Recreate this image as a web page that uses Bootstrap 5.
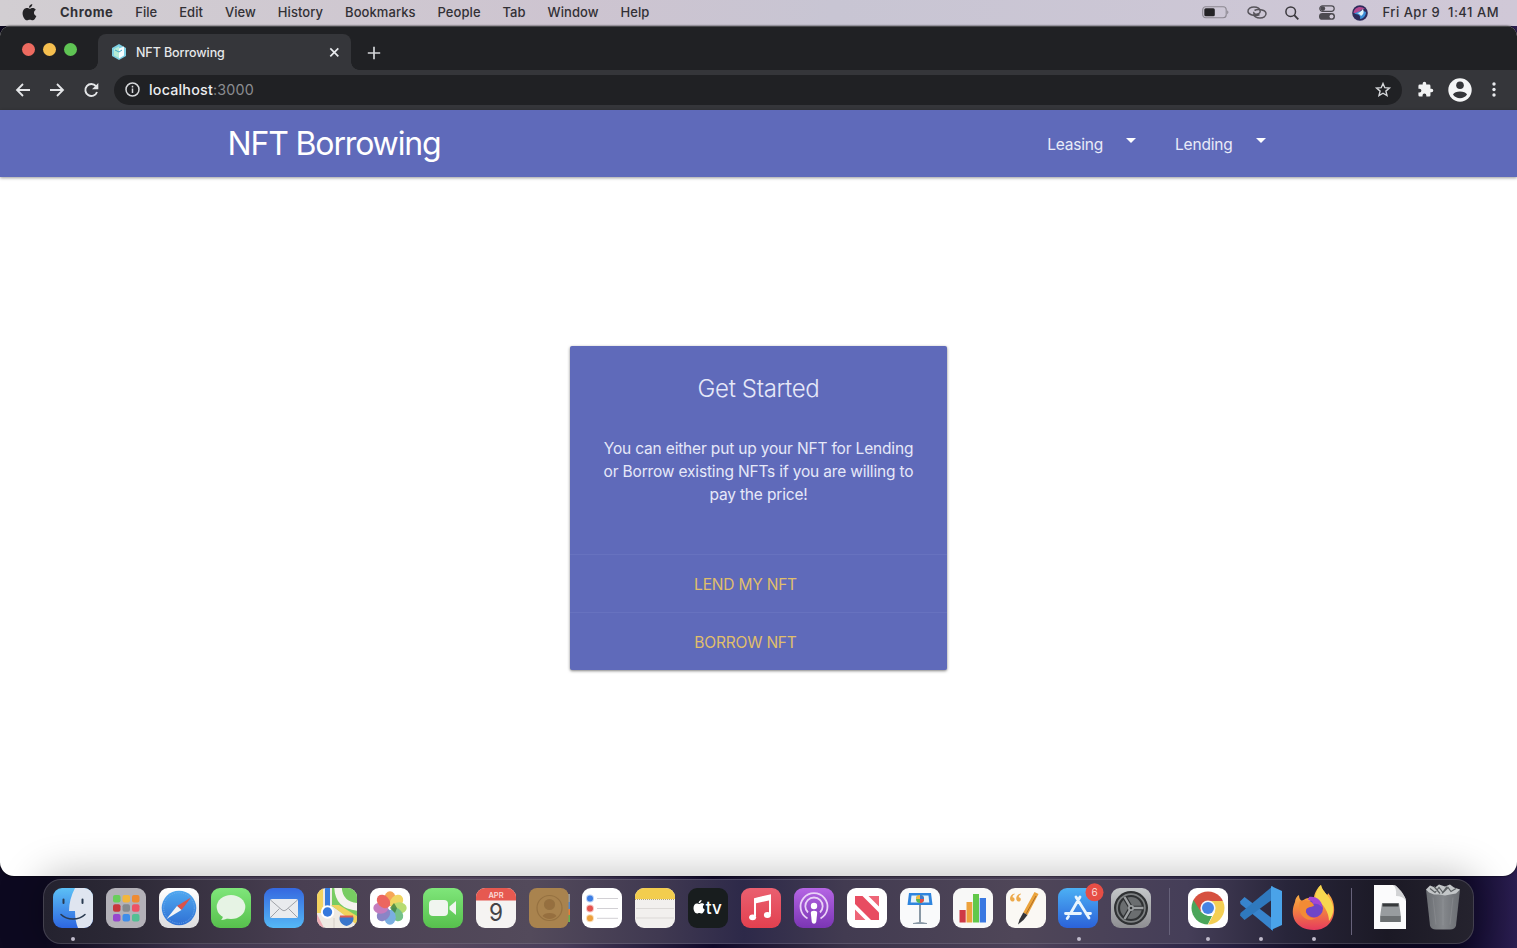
<!DOCTYPE html>
<html lang="en">
<head>
<meta charset="utf-8">
<meta name="viewport" content="width=device-width, initial-scale=1">
<title>NFT Borrowing</title>
<link href="https://cdn.jsdelivr.net/npm/bootstrap@5.3.0/dist/css/bootstrap.min.css" rel="stylesheet">
<style>
html,body{height:100%;overflow:hidden}
body{font-family:Inter,"Liberation Sans",sans-serif;background:linear-gradient(90deg,#0d0920 0,#0d0920 3%,#4a3f5c 13%,#66566f 28%,#55486a 37%,#120a30 47%,#453c56 56%,#5a4d69 68%,#322a52 80%,#100b24 88%,#0c0726 96%,#2b1e50 100%);height:948px}
svg{display:block;overflow:visible;flex:none}
.menubar{height:26px;background:linear-gradient(90deg,#d2ced2,#cdc4d0 38%,#c8c5d3 55%,#d0c8d7);color:#323035;font-size:13px;font-weight:500;padding:0 18px 1px 22px}
.menus{gap:21.9px;margin-left:23px}
.menus span{letter-spacing:.07px}
.menus b{letter-spacing:.5px}
.clock{margin-left:14px;letter-spacing:.5px}
.chrome-win{height:850px;border-radius:10px 10px 14px 14px;overflow:hidden;background:#fff;box-shadow:0 0 2px #000}
.tabstrip{height:44px;background:#202124;border-top:1px solid #4a4a4d}
.lights{gap:8px;padding:16px 0 0 22px;width:98px}
.light{width:13px;height:13px;border-radius:50%}
.tab-active{width:253px;height:36px;margin-top:7px;background:#35363a;border-radius:8px 8px 0 0;color:#e6e8ea;font-size:12.5px;font-weight:500;letter-spacing:-.08px;padding:0 11px 0 13px;position:relative}
.tab-active:before,.tab-active:after{content:"";position:absolute;bottom:0;width:8px;height:8px}
.tab-active:before{left:-8px;background:radial-gradient(circle at 0 0,transparent 7.5px,#35363a 8px)}
.tab-active:after{right:-8px;background:radial-gradient(circle at 100% 0,transparent 7.5px,#35363a 8px)}
.toolbar{height:40px;background:#35363a;padding:0 21px 1px 15px}
.omnibox{height:30px;border-radius:15px;background:#202124;margin-left:15px;padding:0 11px;font-size:14.3px;letter-spacing:.2px;color:#8b8d91}
.omnibox b{font-weight:500;color:#eceef0}
.app-nav{height:67px;background:#5f6aba;box-shadow:0 1px 3px rgba(0,0,0,.4);color:#fff}
.app-inner{width:1062px}
.brand-title{font-size:32px;letter-spacing:-1.15px;padding-top:1px}
.nav-drop{font-size:15.5px;color:#e9ebf8;padding:3px 24px 0 14.5px;gap:23px;letter-spacing:-.2px}
.nav-drop+.nav-drop{padding-left:15px}
.caret{border:5.5px solid transparent;border-top-color:#fff;border-bottom:0;margin-top:-10px}
.stage{padding-top:168.5px}
.start-card{width:377px;height:324.5px;background:#5f6aba;border-radius:2px;box-shadow:0 1px 3px rgba(0,0,0,.5);color:#e6e8f8}
.start-card h1{font-size:24px;font-weight:300;letter-spacing:-.35px;line-height:30px;margin:28px 0 33.500px}
.start-card p{font-size:15.5px;line-height:23.2px;letter-spacing:-.17px;margin:0}
.start-top{height:208px}
.action-row{height:58px;border-top:1px solid #6772bf;padding-right:26px;color:#e0bf6b;font-size:15.5px;letter-spacing:-.2px;text-decoration:none;line-height:59px}
.dock-wrap{height:72px;padding:3px 43px 4px}
.dock{height:65px;border-radius:18px;border:1px solid rgba(160,155,175,.25);background:linear-gradient(90deg,#24222f 0,#2b2835 5%,#493f52 18%,#534a5b 34%,#403951 43%,#2d2949 49%,#423b51 56%,#4f4658 68%,#453e58 80%,#28253a 87%,#1b1925 94%,#25232e 100%);box-shadow:0 0 42px 3px rgba(0,0,0,.28);padding-left:2.2px;position:relative}
.dock-item{width:52.95px;height:63px;padding-top:8px;position:relative;flex:none}
.dock-item svg{margin:auto}
.run:after{content:"";position:absolute;left:24.5px;top:56.5px;width:4px;height:4px;border-radius:50%;background:#c0bbcb}
.rule{width:23.5px;flex:none}
.rule:after{content:"";display:block;width:1px;height:47px;margin:8px auto;background:#67627a}
</style>
</head>
<body>
<header class="menubar d-flex align-items-center">
  <svg width="15" height="17" viewBox="0 0 15 17" fill="#242326"><path d="M10.3 0C10.5 1.8 9 3.8 7 3.8 6.8 2.1 8.5.2 10.3 0zM7.6 4.8c.8 0 1.6-.8 3-.8 1.300 0 2.500.7 3.200 1.700-2.700 1.600-2.300 5.200.6 6.300C13.500 14.200 12.200 16.300 10.600 16.300c-1 0-1.500-.6-2.800-.6s-1.800.6-2.800.6C2.800 16.300.6 12.600.6 9.500.6 6.200 2.500 4.100 4.900 4.100c1.200 0 2 .7 2.700.7z"/></svg>
  <nav class="menus d-flex"><b>Chrome</b><span>File</span><span>Edit</span><span>View</span><span>History</span><span>Bookmarks</span><span>People</span><span>Tab</span><span>Window</span><span>Help</span></nav>
  <div class="d-flex align-items-center ms-auto">
    <svg width="27" height="13" viewBox="0 0 27 13"><rect x=".7" y=".8" width="23.500" height="11" rx="3" fill="none" stroke="#8c8891" stroke-width="1.100"/><rect x="2.300" y="2.300" width="10.500" height="8" rx="1.500" fill="#242326"/><path d="M25.200 4.300q2.500 2 0 4z" fill="#8c8891"/></svg>
    <svg style="margin-left:18px" width="20" height="13" viewBox="0 0 20 13" fill="none" stroke="#57545b" stroke-width="1.500"><path d="M12.500 8.500C10 10 2 9.800 1 5.800.5 2.500 4 1 7 1c3.500 0 6.500 1.800 6.200 4.500-.2 2-2.700 3-5 2.500-1.200-.4-1.700-1.200-1.200-2"/><path d="M7.500 4.500c2.500-1.500 10.500-1.300 11.500 2.700.5 3.300-3 4.800-6 4.800-3.500 0-6.500-1.800-6.200-4.500"/></svg>
    <svg style="margin-left:18px" width="14" height="14" viewBox="0 0 14 14" fill="none" stroke="#3a383d" stroke-width="1.500"><circle cx="5.700" cy="5.700" r="4.800"/><path d="M9.200 9.200 13.300 13.300" stroke-width="1.900"/></svg>
    <svg style="margin-left:20px" width="16" height="15" viewBox="0 0 16 15"><rect x=".8" y=".8" width="14.400" height="5.600" rx="2.800" fill="none" stroke="#4c4a50" stroke-width="1.200"/><circle cx="3.800" cy="3.600" r="2.400" fill="#4c4a50"/><rect y="8" width="16" height="6.800" rx="3.400" fill="#4c4a50"/><circle cx="12.500" cy="11.400" r="2" fill="#d0c8d7"/></svg>
    <svg style="margin-left:17px" width="16" height="16" viewBox="0 0 16 16"><circle cx="8" cy="8" r="7.800" fill="#2d2b5c"/><path d="M1.500 8C2 2 9 0 13 4 9 4 8 6 7 8z" fill="#b54a91"/><path d="M2 9c4-3 9-4 12-2 0 4-3 7-6 7C9 10 6 9 2 9z" fill="#3c8fd8"/><path d="M5 8c3 0 4-2 6-4 1 3 1 5-2 7-1-1.500-2-2.500-4-3z" fill="#e0f3fa"/></svg>
    <span class="clock text-nowrap">Fri Apr 9&nbsp; 1:41 AM</span>
  </div>
</header>

<main class="chrome-win">
  <div class="tabstrip d-flex">
    <div class="lights d-flex"><i class="light" style="background:#ed6b60"></i><i class="light" style="background:#f5bf4f"></i><i class="light" style="background:#5fc454"></i></div>
    <div class="tab-active d-flex align-items-center">
      <svg width="16" height="16" viewBox="0 0 16 16"><path d="M8 0l7 4v8l-7 4-7-4V4z" fill="#7fd0e4"/><path d="M8 4.500l5-2v9L8 14.500z" fill="#f5fdff"/><path d="M3 5l5-2.500V14l-5-2.500z" fill="#b5ecd6"/><path d="M4 6l4 2 3-2" stroke="#46aacb" fill="none"/></svg>
      <span style="margin-left:9px;padding-top:2px">NFT Borrowing</span>
      <svg class="ms-auto" width="11" height="11" viewBox="0 0 11 11" stroke="#e8eaed" stroke-width="1.700"><path d="M1.300 1.300l8 8M9.300 1.300l-8 8"/></svg>
    </div>
    <svg style="margin:19px 0 0 16px" width="14" height="14" viewBox="0 0 14 14" stroke="#d3d5d8" stroke-width="1.700"><path d="M7 .8v12.400M.8 7h12.400"/></svg>
  </div>
  <div class="toolbar d-flex align-items-center">
    <svg width="16" height="14" viewBox="0 0 16 14" fill="none" stroke="#e4e6e8" stroke-width="1.800"><path d="M15 7H2M8 1L2 7l6 6"/></svg>
    <svg style="margin-left:18px" width="16" height="14" viewBox="0 0 16 14" fill="none" stroke="#e4e6e8" stroke-width="1.800"><path d="M1 7h13M8 1l6 6-6 6"/></svg>
    <svg style="margin-left:18px" width="16" height="14" viewBox="0 0 16 14" fill="none" stroke="#e4e6e8" stroke-width="1.900"><path d="M13 3.200A6 6 0 1 0 14 9"/><path d="M15.300 0v6.300H9z" fill="#e4e6e8" stroke="none"/></svg>
    <div class="omnibox d-flex align-items-center flex-grow-1">
      <svg width="15" height="15" viewBox="0 0 15 15" fill="none" stroke="#d5d7da" stroke-width="1.500"><circle cx="7.500" cy="7.500" r="6.500"/><path d="M7.500 6.500v4.500M7.500 3.800v1.600"/></svg>
      <span style="margin-left:9px"><b>localhost</b>:3000</span>
      <svg class="ms-auto" width="16" height="15" viewBox="0 0 16 15" fill="none" stroke="#d5d7da" stroke-width="1.400"><path d="M8 1.500l1.800 4.200 4.600.4-3.500 3 1.100 4.500-4-2.400-4 2.400 1.100-4.500-3.500-3 4.600-.4z"/></svg>
    </div>
    <svg style="margin-left:15px" width="17" height="17" viewBox="0 0 24 24" fill="#f2f3f4"><path d="M20.500 11H19V7a2 2 0 0 0-2-2h-4V3.500a2.500 2.500 0 0 0-5 0V5H4a2 2 0 0 0-2 2v3.800h1.500a2.700 2.700 0 0 1 0 5.400H2V20a2 2 0 0 0 2 2h3.800v-1.500a2.700 2.700 0 0 1 5.400 0V22H17a2 2 0 0 0 2-2v-4h1.500a2.500 2.500 0 0 0 0-5z"/></svg>
    <svg style="margin-left:14px" width="24" height="24" viewBox="0 0 24 24"><circle cx="12" cy="12" r="11.700" fill="#f4f5f6"/><circle cx="12" cy="7.300" r="3.800" fill="#35363a"/><path d="M5 16.500c1.500-4 12.500-4 14 0-3.300 5-10.700 5-14 0z" fill="#35363a"/></svg>
    <svg style="margin-left:20px" width="4" height="15" viewBox="0 0 4 15" fill="#e8eaed"><circle cx="2" cy="2" r="1.700"/><circle cx="2" cy="7.500" r="1.700"/><circle cx="2" cy="13" r="1.700"/></svg>
  </div>
  <nav class="app-nav d-flex justify-content-center">
    <div class="app-inner d-flex align-items-center justify-content-between">
      <span class="brand-title">NFT Borrowing</span>
      <div class="d-flex"><div class="nav-drop d-flex align-items-center">Leasing<i class="caret"></i></div><div class="nav-drop d-flex align-items-center">Lending<i class="caret"></i></div></div>
    </div>
  </nav>
  <section class="stage d-flex justify-content-center">
    <div class="start-card text-center">
      <div class="start-top d-flex flex-column">
        <h1>Get Started</h1>
        <p>You can either put up your NFT for Lending<br>or Borrow existing NFTs if you are willing to<br>pay the price!</p>
      </div>
      <a class="action-row d-block">LEND MY NFT</a>
      <a class="action-row d-block">BORROW NFT</a>
    </div>
  </section>
</main>

<div class="dock-wrap">
<svg width="0" height="0" class="position-absolute"><defs>
  <linearGradient id="gFind" x2="0" y2="1"><stop stop-color="#5cc0f6"/><stop offset="1" stop-color="#2d66e0"/></linearGradient>
  <linearGradient id="gGreen" x2="0" y2="1"><stop stop-color="#7fe67a"/><stop offset="1" stop-color="#57c04d"/></linearGradient>
  <linearGradient id="gMail" x2="0" y2="1"><stop stop-color="#3568e0"/><stop offset="1" stop-color="#55b8f5"/></linearGradient>
  <linearGradient id="gSaf" x2="0" y2="1"><stop stop-color="#4fa8f0"/><stop offset="1" stop-color="#2f70d4"/></linearGradient>
  <linearGradient id="gWhite" x2="0" y2="1"><stop stop-color="#fff"/><stop offset="1" stop-color="#dcdcde"/></linearGradient>
  <linearGradient id="gPod" x2="0" y2="1"><stop stop-color="#b565e4"/><stop offset="1" stop-color="#7a35b4"/></linearGradient>
  <linearGradient id="gStore" x2="0" y2="1"><stop stop-color="#4cb0f4"/><stop offset="1" stop-color="#2b62d9"/></linearGradient>
  <linearGradient id="gMusic" x2="0" y2="1"><stop stop-color="#ea6070"/><stop offset="1" stop-color="#e2404f"/></linearGradient>
  <linearGradient id="gGrey" x2="0" y2="1"><stop stop-color="#c5c8ca"/><stop offset="1" stop-color="#8e8e92"/></linearGradient>
  <linearGradient id="gFox" x2="0" y2="1"><stop stop-color="#fbc94e"/><stop offset=".5" stop-color="#f38a3d"/><stop offset="1" stop-color="#e63a5e"/></linearGradient>
  <linearGradient id="gTrash" x2="1" y2="0"><stop stop-color="#6a6d72"/><stop offset=".5" stop-color="#85888c"/><stop offset="1" stop-color="#6a6d72"/></linearGradient>
  <clipPath id="tile"><rect width="40" height="40" rx="9"/></clipPath>
  <clipPath id="disc"><circle cx="20" cy="20" r="16.500"/></clipPath>
</defs></svg>
<div class="dock d-flex">
  <div class="dock-item run"><svg width="40" height="40"><g clip-path="url(#tile)"><rect width="40" height="40" fill="url(#gFind)"/><path d="M22 0C18 8 16 15 16 23h6c0 7 1 12 3 17h15V0z" fill="#dfe5f0"/></g><path d="M10.500 11.500v3.500M29.500 11.500v3.500" stroke="#293a50" stroke-width="2" stroke-linecap="round"/><path d="M8 26.500c6 6 18 6 24 0" fill="none" stroke="#293a50" stroke-width="1.500" stroke-linecap="round"/></svg></div>
  <div class="dock-item"><svg width="40" height="40"><rect width="40" height="40" rx="9" fill="#b3b1b8"/><g><rect x="7" y="7" width="7.500" height="7.500" rx="2" fill="#68ce5b"/><rect x="16.500" y="7" width="7.500" height="7.500" rx="2" fill="#f3b63d"/><rect x="26" y="7" width="7.500" height="7.500" rx="2" fill="#ee8b32"/><rect x="7" y="16.300" width="7.500" height="7.500" rx="2" fill="#c8363b"/><rect x="16.500" y="16.300" width="7.500" height="7.500" rx="2" fill="#858a8e"/><rect x="26" y="16.300" width="7.500" height="7.500" rx="2" fill="#ee5265"/><rect x="7" y="26" width="7.500" height="7.500" rx="2" fill="#9746ce"/><rect x="16.500" y="26" width="7.500" height="7.500" rx="2" fill="#408de9"/><rect x="26" y="26" width="7.500" height="7.500" rx="2" fill="#53bf94"/></g></svg></div>
  <div class="dock-item"><svg width="40" height="40"><rect width="40" height="40" rx="9" fill="url(#gWhite)"/><circle cx="20" cy="20" r="17.300" fill="url(#gSaf)"/><circle cx="20" cy="20" r="15.300" fill="none" stroke="#7fb6ef" stroke-width="1" stroke-dasharray=".7 1.200"/><path d="M32 9.500 18 18l4.500 4z" fill="#d9534a"/><path d="M7.500 31l10.500-13 4.500 4z" fill="#f2f4f6"/></svg></div>
  <div class="dock-item"><svg width="40" height="40"><rect width="40" height="40" rx="9" fill="url(#gGreen)"/><ellipse cx="20" cy="19" rx="14.300" ry="12" fill="#e6f3e4"/><path d="M12 27c0 3-1 4-2 5 3 0 6-1 8-3z" fill="#e6f3e4"/></svg></div>
  <div class="dock-item"><svg width="40" height="40"><rect width="40" height="40" rx="9" fill="url(#gMail)"/><rect x="6" y="11" width="28" height="19" rx="2" fill="#e9ebee"/><path d="M6.500 12l11.500 10q2 1.500 4 0L33.500 12M6.500 29.500l9-9M33.500 29.500l-9-9" fill="none" stroke="#a0a3a9"/></svg></div>
  <div class="dock-item"><svg width="40" height="40"><g clip-path="url(#tile)"><rect width="40" height="40" fill="#eeeae3"/><path d="M0 0h6v25H0z" fill="#f3d35f"/><path d="M15 0h25v35L15 18z" fill="#78cc62"/><path d="M21 -2q0 20 21 21" stroke="#f5f3ee" stroke-width="7.500" fill="none"/><path d="M14 17 40 37v-9L22 17z" fill="#f1d25c"/><path d="M0 26 7 40H0z" fill="#edacb5"/><path d="M10.500 0v21" stroke="#397dde" stroke-width="5"/><path d="M17 30v10" stroke="#d4cec7"/><circle cx="10.500" cy="24" r="6.700" fill="#fff"/><circle cx="10.500" cy="24" r="4.700" fill="#3579dd"/><path d="M23 28c4 1 9 1 13 0 2 5-2 9-6.500 10C25 37 21 33 23 28z" fill="#3976cb"/><path d="M23 27.500h13v2H23z" fill="#db5a51"/></g></svg></div>
  <div class="dock-item"><svg width="40" height="40"><rect width="40" height="40" rx="9" fill="#fff"/><g opacity=".86"><ellipse cx="20" cy="10.800" rx="5.800" ry="7.500" fill="#f5983c"/><ellipse cx="20" cy="10.800" rx="5.800" ry="7.500" transform="rotate(45 20 20)" fill="#efcf48"/><ellipse cx="20" cy="10.800" rx="5.800" ry="7.500" transform="rotate(90 20 20)" fill="#acd65b"/><ellipse cx="20" cy="10.800" rx="5.800" ry="7.500" transform="rotate(135 20 20)" fill="#5fb878"/><ellipse cx="20" cy="10.800" rx="5.800" ry="7.500" transform="rotate(180 20 20)" fill="#65a1dd"/><ellipse cx="20" cy="10.800" rx="5.800" ry="7.500" transform="rotate(225 20 20)" fill="#7772bd"/><ellipse cx="20" cy="10.800" rx="5.800" ry="7.500" transform="rotate(270 20 20)" fill="#bb67b4"/><ellipse cx="20" cy="10.800" rx="5.800" ry="7.500" transform="rotate(315 20 20)" fill="#e94e46"/></g><path d="M20 20l4-5 3 5-2 5z" fill="#41813d" opacity=".8"/></svg></div>
  <div class="dock-item"><svg width="40" height="40"><rect width="40" height="40" rx="9" fill="url(#gGreen)"/><rect x="6" y="12" width="19" height="16" rx="4" fill="#f0f5ef"/><path d="M26.500 18.500l6.500-5.500v14l-6.500-5.500z" fill="#f0f5ef"/></svg></div>
  <div class="dock-item"><svg width="40" height="40"><g clip-path="url(#tile)"><rect width="40" height="40" fill="#f5f3f2"/><rect width="40" height="12.500" fill="#e65950"/></g><text x="20" y="9.800" text-anchor="middle" font-size="7.500" font-weight="600" fill="#fbdcd9">APR</text><text x="20" y="33" text-anchor="middle" font-size="24" fill="#454447" textLength="14" lengthAdjust="spacingAndGlyphs">9</text></svg></div>
  <div class="dock-item"><svg width="40" height="40"><path d="M38 6h3v9h-3z" fill="#999"/><path d="M38 14h3v7h-3z" fill="#5686c4"/><path d="M38 21h3v6h-3z" fill="#e57e3b"/><path d="M38 27h3v7h-3z" fill="#67ae50"/><rect width="39.500" height="40" rx="8" fill="#a9834e"/><g fill="none" stroke="#957141" stroke-width="1.200"><circle cx="20.500" cy="20" r="12.500"/><circle cx="20.500" cy="16.500" r="5" fill="#966f3f"/></g><path d="M13.500 28c2-4 12-4 14 0-4 4-10 4-14 0z" fill="#966f3f"/></svg></div>
  <div class="dock-item"><svg width="40" height="40"><rect width="40" height="40" rx="9" fill="#fff"/><g fill="#3e7fe4" stroke-opacity=".35" stroke-width="2"><circle cx="8" cy="10.500" r="3" stroke="#3e7fe4"/><circle cx="8" cy="20.500" r="3" fill="#e5554f" stroke="#e5554f"/><circle cx="8" cy="30.300" r="3" fill="#eda13d" stroke="#eda13d"/></g><path d="M15 10.500h21M15 20.500h21M15 30.300h21" stroke="#d2d0d4"/></svg></div>
  <div class="dock-item"><svg width="40" height="40"><g clip-path="url(#tile)"><rect width="40" height="40" fill="#f2f0ee"/><rect width="40" height="11" fill="#f3cd4e"/></g><path d="M0 11.500h40" stroke="#b8a66e" stroke-dasharray="1 1"/><path d="M1 20.500h38M1 30h38" stroke="#dcd9d7"/></svg></div>
  <div class="dock-item"><svg width="40" height="40"><rect width="40" height="40" rx="9" fill="#181d1e"/><path d="M13.600 12c0 2-1.500 3.200-3 3.200 0-1.800 1.400-3 3-3.200zM11.300 16c1 0 1.500-.7 2.600-.7 1 0 1.900.5 2.400 1.200-2 1.300-1.700 4.300.5 5-.8 2-1.800 4-3.300 4-.8 0-1.200-.5-2.200-.5s-1.400.5-2.200.5C7 25.500 5.500 22.500 5.500 20c0-2.900 1.500-4.600 3.400-4.600 1 0 1.500.6 2.400.6z" fill="#fff"/><text x="17.800" y="25.800" font-size="18" font-weight="500" fill="#fff" textLength="16" lengthAdjust="spacingAndGlyphs">tv</text></svg></div>
  <div class="dock-item"><svg width="40" height="40"><rect width="40" height="40" rx="9" fill="url(#gMusic)"/><path d="M14 28V11l15-3.500V26" fill="none" stroke="#fff" stroke-width="2"/><path d="M14 10.500 29 7.300v5L14 15.500z" fill="#fff"/><ellipse cx="11.600" cy="29.300" rx="3.500" ry="2.900" fill="#fff"/><ellipse cx="26.400" cy="27" rx="3.500" ry="2.900" fill="#fff"/></svg></div>
  <div class="dock-item"><svg width="40" height="40"><rect width="40" height="40" rx="9" fill="url(#gPod)"/><g fill="none" stroke="#ead2f7" stroke-width="1.800"><path d="M13.500 30.500a13.500 13.500 0 1 1 13 0M14 24.500a8.700 8.700 0 1 1 12 0"/></g><circle cx="20" cy="18" r="3.200" fill="#fff"/><path d="M16.800 25q0-2.300 3.200-2.300t3.200 2.300l-1 9q-.4 1.800-2.200 1.800T17.800 34z" fill="#fff"/></svg></div>
  <div class="dock-item"><svg width="40" height="40"><rect width="40" height="40" rx="9" fill="#fff"/><path d="M8 8h7.500L32 24.500V32h-8L8 16z" fill="#e84c61"/><path d="M21.500 8H32v10.500zM8 21.500V32h10.500z" fill="#ee6577"/></svg></div>
  <div class="dock-item"><svg width="40" height="40"><rect width="40" height="40" rx="9" fill="#f9fafb"/><path d="M20 16v18" stroke="#8998a5" stroke-width="2"/><path d="M13 35.500q7-2 14 0z" stroke="#8998a5" fill="#8998a5"/><path d="M9 5h22l1.500 12h-25z" fill="#2f85de"/><path d="M11.500 7.500h17l.8 7H10.700z" fill="#e7f2f9"/><circle cx="20" cy="11" r="4" fill="#58b652"/><path d="M20 11V7a4 4 0 0 1 4 4z" fill="#3e79cd"/><path d="M20 11h4a4 4 0 0 1-4 4z" fill="#e84d46"/><path d="M20 11v-4a4 4 0 0 0-4 4z" fill="#f3b83e"/></svg></div>
  <div class="dock-item"><svg width="40" height="40"><rect width="40" height="40" rx="9" fill="#f8f8f7"/><path d="M6.500 22h6.200v12.500H6.500z" fill="#cf3945"/><path d="M13.500 14h5.800v20.500h-5.800z" fill="#eda23c"/><path d="M20 6h6v28.500h-6z" fill="#62c849"/><path d="M26.700 10h6.300v24.500h-6.300z" fill="#3a78e1"/></svg></div>
  <div class="dock-item"><svg width="40" height="40"><rect width="40" height="40" rx="9" fill="#faf8f4"/><g fill="#eda94a"><path d="M8.500 5.500C3 6.500 3 13.500 6.300 13.500c3 0 3-4 .3-4.200C6.500 8 7 7 8.800 6.300zM14.700 5.500C9.200 6.500 9.200 13.500 12.500 13.500c3 0 3-4 .3-4.200C12.700 8 13.200 7 15 6.300z"/></g><path d="M28.500 4l4 2-11 21-4.200-2.500z" fill="#eba33b"/><path d="M30 8 20 26" stroke="#ad6c26"/><path d="M17.300 24.500l4.200 2.500-4 5-5.500 4.500 1.500-5z" fill="#353438"/></svg></div>
  <div class="dock-item run"><svg width="40" height="40"><rect width="40" height="40" rx="9" fill="url(#gStore)"/><g stroke="#e9f5fd" stroke-width="2.800" stroke-linecap="round"><path d="M22 9 12.500 25.500M18 9l13 21M7.500 25.500h15M28 25.500h4.500M10.500 28.500l-1.300 2"/></g><circle cx="36.500" cy="4.300" r="9" fill="#e64e45"/><text x="36.500" y="8" text-anchor="middle" font-size="10" fill="#fbdedb">6</text></svg></div>
  <div class="dock-item"><svg width="40" height="40"><rect width="40" height="40" rx="9" fill="url(#gGrey)"/><circle cx="20" cy="20" r="17" fill="#2f3133"/><circle cx="20" cy="20" r="14.800" fill="#7d8082"/><circle cx="20" cy="20" r="12" fill="#6b6e70" stroke="#2f3133" stroke-width="2.200"/><path d="M20 20 14 10M20 20h12M20 20l-6 10" stroke="#2f3133" stroke-width="4.500"/><path d="M20 20 13.500 9M20 20h12.500M20 20l-6.500 11" stroke="#9da0a2" stroke-width="2.400"/><circle cx="20" cy="20" r="3" fill="#9da0a2"/><circle cx="20" cy="20" r="1.300" fill="#2f3133"/></svg></div>
  <div class="rule"></div>
  <div class="dock-item run"><svg width="40" height="40"><rect width="40" height="40" rx="9" fill="#fff"/><g clip-path="url(#disc)"><path d="M0 0h40v13H20l-7 11L0 8z" fill="#d6503f"/><path d="M3 8l10 16 7 4 4 0-6 12H0V8z" fill="#4ba65a"/><path d="M20 13h20v27H18l9-16z" fill="#f4cf54"/></g><circle cx="20" cy="20" r="7.600" fill="#f3f6fb"/><circle cx="20" cy="20" r="6" fill="#4783e4"/></svg></div>
  <div class="dock-item run"><svg width="42" height="44" viewBox="0 1 42 44"><path d="M0 14.500 4.500 10 33 32v12L.5 17z" fill="#3784cd"/><path d="M0 28.500 4.500 33 33 12V-1L.5 26z" fill="#2f79be"/><path d="M31-1l11 5v34l-11 5z" fill="#4aa3e9"/></svg></div>
  <div class="dock-item run"><svg width="44" height="44" viewBox="0 0 44 44"><path d="M3 14c0-3 2-6 4-7 0 3 1 5 3 6 3-3 8-4 12-3 0-4 3-10 7-13 1 5 4 7 6 10 1-1 1-1 1-2 11 12 8 37-14 37C3 42-3 27 3 14z" fill="url(#gFox)"/><path d="M29-3c1 5 4 7 6 10 7 8 9 17 2 26 0-8-5-18-14-21 0-4 2-12 6-15z" fill="#f7d74f"/><circle cx="22" cy="20.500" r="9" fill="#6f45c8"/><path d="M8 13c6-2 13 0 14 5-3 1-7 1-8 4-1 5 4 9 10 8-9 6-20-4-16-17z" fill="#f28b35"/><path d="M17 9c8-1 13 4 13 10-3-3-6-4-9-3 0-3-2-4-5-4z" fill="#a347d5"/></svg></div>
  <div class="rule"></div>
  <div class="dock-item"><svg width="32" height="44" viewBox="0 3 32 44"><path d="M0 0h19q3 0 5 3l6 8q2 2 2 5v28H0z" fill="#fbfbfc"/><path d="M19 0q4 3 3 11 7 0 10 5-2-8-8-13-2-3-5-3z" fill="#d2d3d5"/><path d="M8 18h17l2 14v5H6v-5z" fill="#989c9f"/><path d="M8.500 18.500h16v3h-16z" fill="#36393b"/><path d="M6.500 31h20v6h-20z" fill="#6c7072"/></svg></div>
  <div class="dock-item"><svg width="36" height="46" viewBox="0 2.500 36 46"><path d="M1 4h34l-4 36q-1 4-6 4H11q-5 0-6-4z" fill="url(#gTrash)"/><path d="M1 4l4-4 5 2 4-3 6 2 5-2 4 3 6 2-4 4-6 1-5 1-6-1-5 0-5-2z" fill="#c3c6c8"/><path d="M5 3l5 4 4-5 4 5 5-5 3 4 5-3M9 1l6 7M22 1l-5 7" stroke="#5b5f62" stroke-width="1.200" fill="none"/><path d="M8 12l3 27M18 13v27M28 12l-3 27" stroke="#aaadaf" stroke-opacity=".25"/></svg></div>
</div>
</div>
<script src="https://cdn.jsdelivr.net/npm/bootstrap@5.3.0/dist/js/bootstrap.bundle.min.js"></script>
</body>
</html>
